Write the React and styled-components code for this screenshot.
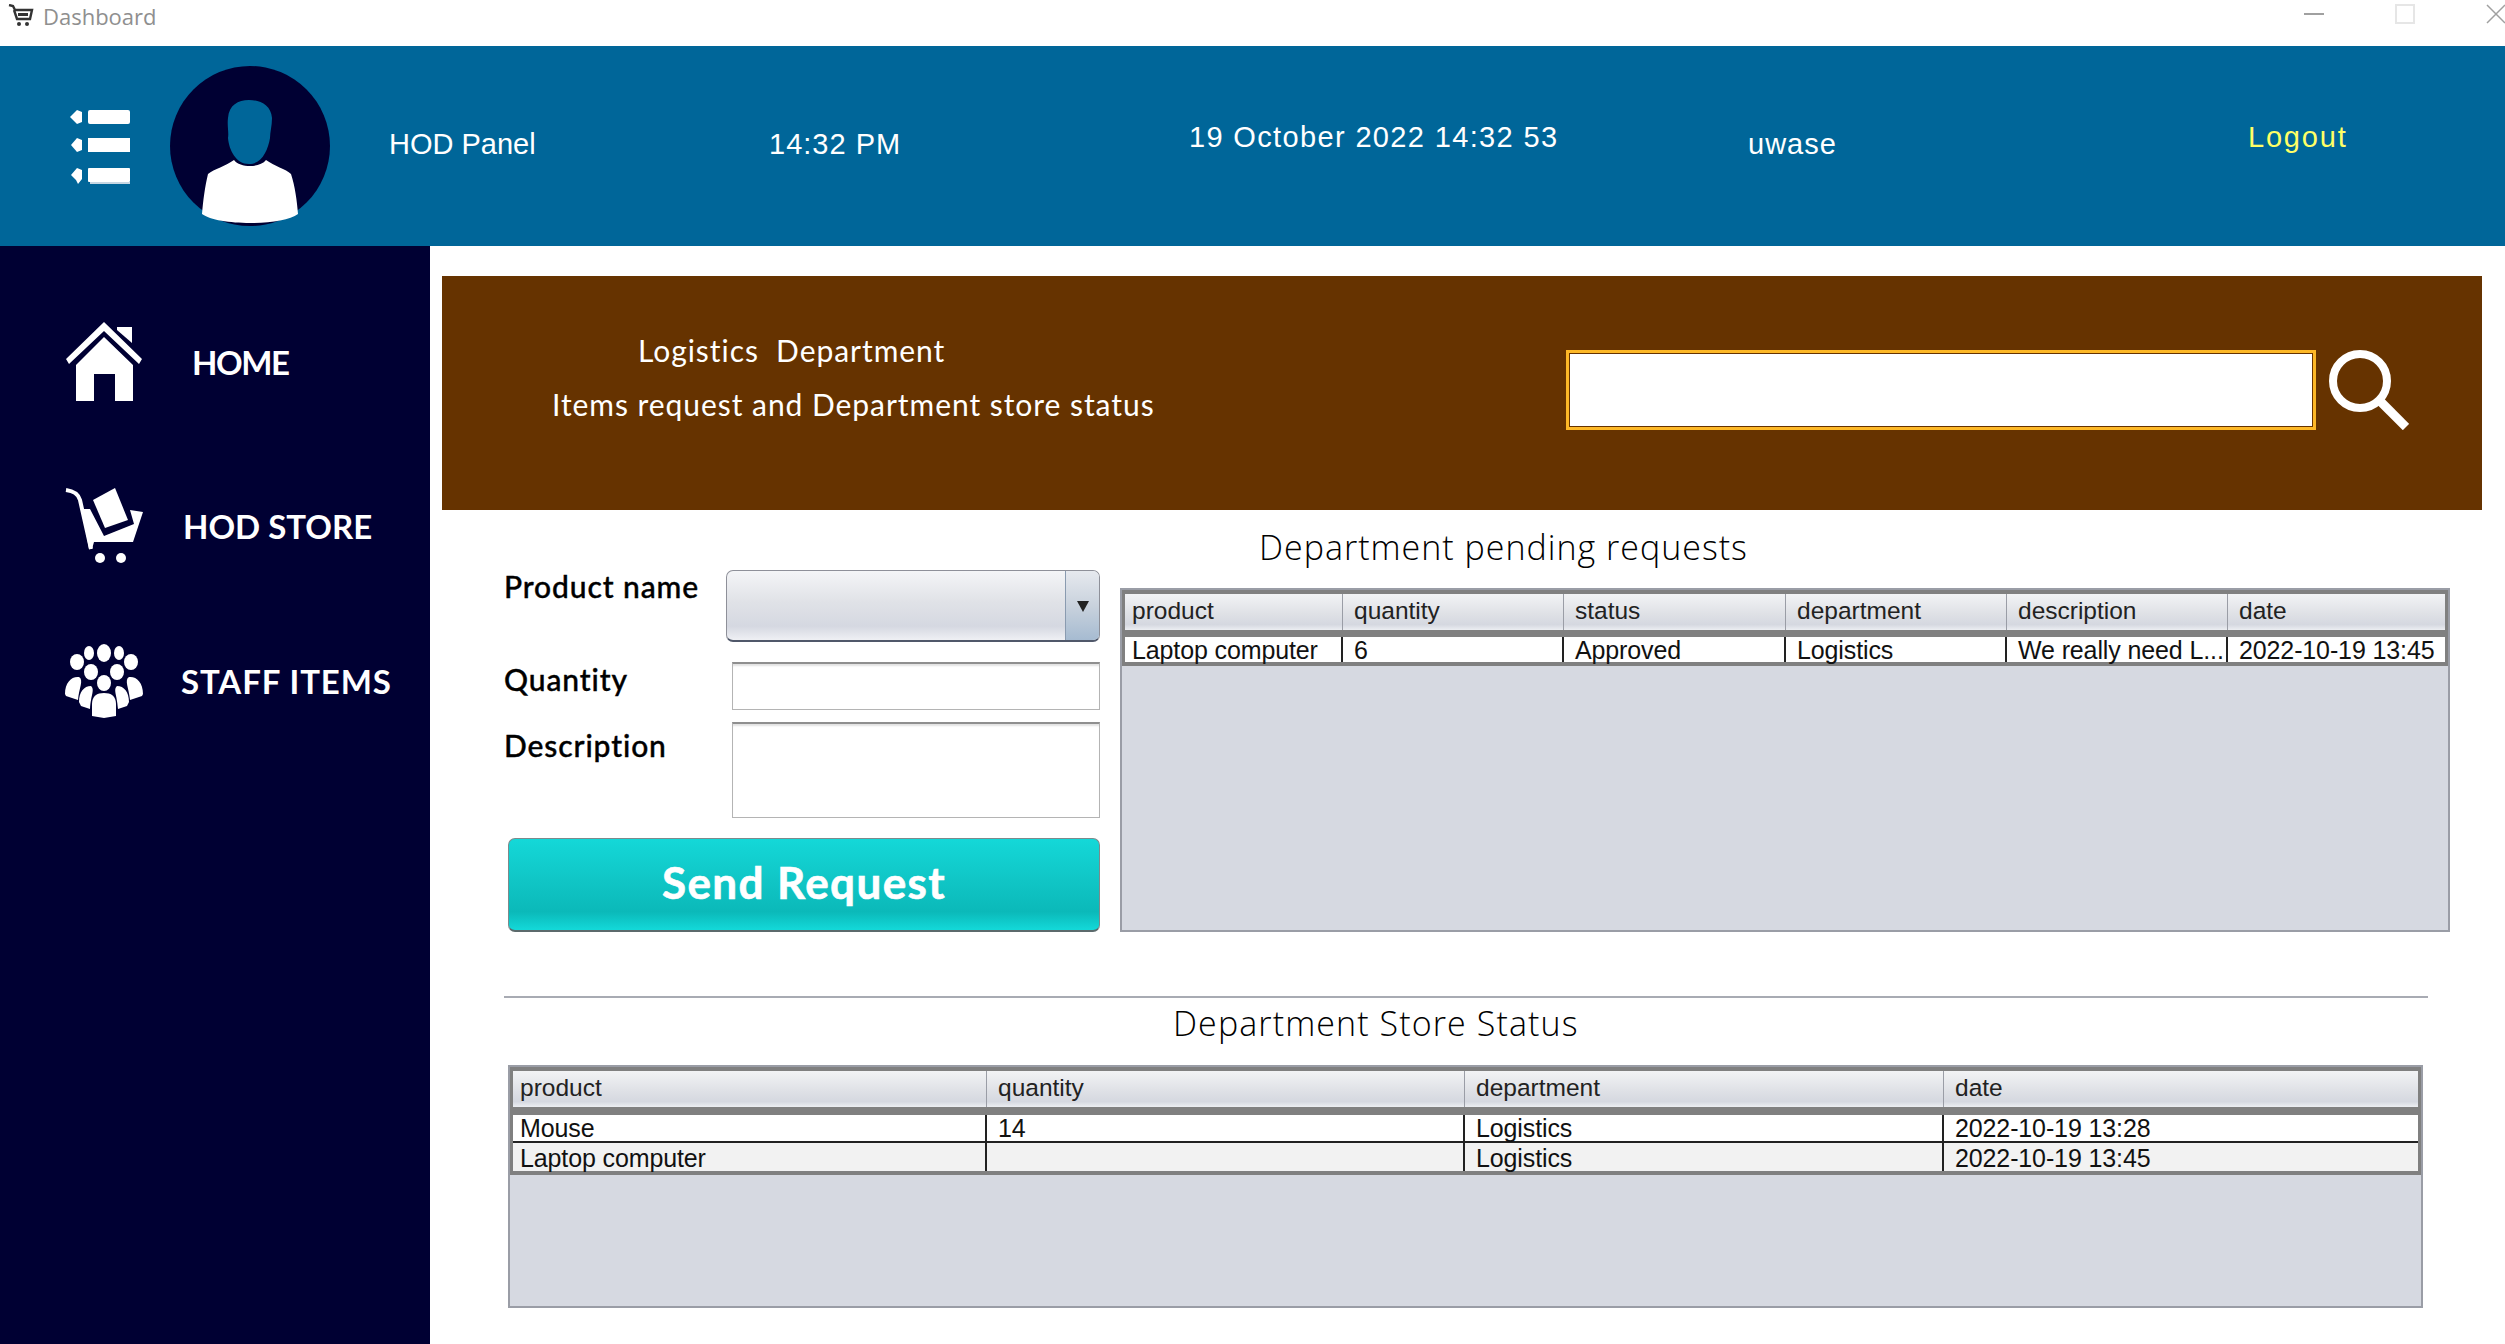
import React from "react";
import styled, { createGlobalStyle } from "styled-components";

const GlobalStyle = createGlobalStyle`
  html, body {
    margin: 0;
    padding: 0;
    background: #fff;
    overflow: hidden;
  }
`;

const Page = styled.div`
  width: 2505px;
  height: 1344px;
  overflow: hidden;
  display: flex;
  flex-direction: column;
  font-family: "Liberation Sans", Arial, sans-serif;
`;

const TitleBar = styled.div`
  height: 46px;
  flex: none;
  display: flex;
  align-items: flex-start;
  padding-left: 8px;
  color: #8f8f8f;
`;

const TitleText = styled.span`
  font-family: "Open Sans", sans-serif;
  font-size: 22px;
  line-height: 32px;
  margin-left: 9px;
`;

const WindowButtons = styled.div`
  margin-left: auto;
  display: flex;
  align-items: flex-start;
  padding-top: 4px;
  gap: 71px;
  margin-right: -1px;
`;

const Header = styled.header`
  height: 200px;
  flex: none;
  background: #006699;
  padding-left: 70px;
  display: grid;
  grid-template-columns: 100px 219px 380px 420px 559px 500px auto;
  align-items: center;
`;

const HeaderText = styled.div`
  color: ${(p) => (p.$yellow ? "#ffff66" : "#fff")};
  font-size: 29px;
  letter-spacing: ${(p) => p.$spacing || "0"};
  padding-bottom: ${(p) => (p.$raised ? "18px" : "4px")};
  white-space: nowrap;
`;

const MenuSvg = styled.svg`
  margin-top: 2px;
`;

const Body = styled.div`
  flex: 1;
  display: flex;
  min-height: 0;
`;

const Sidebar = styled.nav`
  width: 430px;
  flex: none;
  background: #000033;
  padding: 34px 0 0 64px;
  box-sizing: border-box;
`;

const NavItem = styled.div`
  display: flex;
  align-items: center;
  height: ${(p) => p.$height}px;
  gap: ${(p) => p.$gap}px;
`;

const NavLabel = styled.span`
  color: #fff;
  font-family: Lato, sans-serif;
  font-weight: 700;
  font-size: 33px;
  letter-spacing: ${(p) => p.$spacing || "0"};
  white-space: nowrap;
`;

const Content = styled.main`
  flex: 1;
  min-width: 0;
  padding: 30px 0 0 12px;
`;

const Banner = styled.section`
  width: 2040px;
  height: 234px;
  background: #663300;
  display: flex;
  align-items: center;
`;

const BannerText = styled.div`
  width: 1124px;
  flex: none;
  padding-bottom: 32px;
  color: #fff;
  font-family: Lato, sans-serif;
  font-size: 30px;
  letter-spacing: 0.95px;
`;

const BannerLine = styled.div`
  padding-left: ${(p) => p.$indent}px;
  height: 54px;
  line-height: 54px;
  white-space: pre;
`;

const SearchInput = styled.input`
  width: 750px;
  height: 80px;
  margin-bottom: 6px;
  box-sizing: border-box;
  background: #fff;
  border: 3px solid #fdb827;
  box-shadow: inset 0 0 0 1px #663300;
  outline: none;
`;

const SearchIcon = styled.svg`
  width: 80px;
  height: 80px;
  margin: 0 0 6px 13px;
  flex: none;
`;

const Columns = styled.div`
  display: flex;
  gap: 20px;
  padding-left: 62px;
`;

const Form = styled.form`
  width: 596px;
  flex: none;
  padding-top: 60px;
  margin: 0;
`;

const Field = styled.div`
  display: flex;
  justify-content: space-between;
  align-items: flex-start;
  margin-bottom: ${(p) => p.$after}px;
`;

const FieldLabel = styled.label`
  color: #000;
  font-family: Lato, sans-serif;
  font-weight: 500;
  font-size: 30px;
  letter-spacing: 0.9px;
  line-height: 36px;
  margin-top: ${(p) => p.$top}px;
  -webkit-text-stroke: 0.4px #000;
`;

const Combo = styled.div`
  width: 374px;
  height: 72px;
  box-sizing: border-box;
  display: flex;
  justify-content: flex-end;
  border: 1px solid #8e9099;
  border-bottom: 2px solid #50586a;
  border-radius: 7px;
  overflow: hidden;
  background: linear-gradient(#f4f5f7, #e0e2e7 45%, #d5d8e1 80%, #eff0f4);
`;

const ComboArrow = styled.div`
  width: 34px;
  border-left: 1px solid #8a9bb0;
  background: linear-gradient(#e6e9ee, #c9d2dd 50%, #a6bbd1);
  display: flex;
  justify-content: center;
  padding-top: 30px;
  box-sizing: border-box;

  &::after {
    content: "";
    width: 0;
    height: 0;
    border-left: 6px solid transparent;
    border-right: 6px solid transparent;
    border-top: 11px solid #222;
  }
`;

const TextInput = styled.input`
  width: 368px;
  height: 48px;
  box-sizing: border-box;
  border: 1px solid #b4b4b4;
  border-top: 2px solid #8f8f8f;
  box-shadow: inset 0 3px 2px -1px #e2e2e2;
  outline: none;
  display: block;
`;

const TextArea = styled.textarea`
  width: 368px;
  height: 96px;
  box-sizing: border-box;
  border: 1px solid #b4b4b4;
  border-top: 2px solid #8f8f8f;
  box-shadow: inset 0 3px 2px -1px #e2e2e2;
  outline: none;
  resize: none;
  display: block;
`;

const SendButton = styled.button`
  width: 592px;
  height: 94px;
  margin: 0 0 0 4px;
  padding: 0 0 6px;
  display: block;
  border: 1px solid #7d8a8c;
  border-bottom: 2px solid #5c6a6c;
  border-radius: 7px;
  background: linear-gradient(#14d8d8, #10c6c6 45%, #0bb9b9 80%, #13d9d9);
  color: #fff;
  font-family: Lato, sans-serif;
  font-weight: 700;
  font-size: 44px;
  letter-spacing: 1.4px;
  -webkit-text-stroke: 0.6px #fff;
`;

const TablePanel = styled.section`
  width: 1330px;
  flex: none;
`;

const Heading = styled.h2`
  margin: 0;
  height: ${(p) => p.$height}px;
  line-height: ${(p) => p.$line}px;
  padding-left: ${(p) => p.$indent}px;
  font-family: "Open Sans", sans-serif;
  font-weight: 300;
  font-size: 34px;
  letter-spacing: ${(p) => p.$spacing || "0"};
  color: #000;
  white-space: nowrap;
`;

const TableFrame = styled.div`
  height: ${(p) => p.$height}px;
  width: ${(p) => p.$width}px;
  box-sizing: border-box;
  border: 2px solid #9a9da6;
  background: #d6d9e1;
  overflow: hidden;
`;

const Grid = styled.div`
  background: #808080;
  padding: 4px 3px;
`;

const HeaderRow = styled.div`
  display: grid;
  grid-template-columns: ${(p) => p.$columns};
  height: 36px;
  margin-bottom: ${(p) => p.$gap}px;
  background: linear-gradient(#f2f3f5, #dfe1e6 55%, #d5d8e0 85%, #eceef2);
`;

const HeaderCell = styled.div`
  font-size: 24.5px;
  line-height: 34px;
  padding-left: 11px;
  color: #222;
  box-sizing: border-box;
  white-space: nowrap;
  &:first-child {
    padding-left: 7px;
  }
  &:not(:last-child) {
    border-right: 1px solid #9a9da6;
  }
`;

const DataRow = styled.div`
  display: grid;
  grid-template-columns: ${(p) => p.$columns};
  height: ${(p) => p.$height}px;
  box-sizing: content-box;
  background: ${(p) => (p.$odd ? "#f2f2f2" : "#fff")};
  border-top: ${(p) => (p.$first ? "0" : "2px solid #222")};
`;

const DataCell = styled.div`
  font-size: 25px;
  letter-spacing: -0.12px;
  line-height: ${(p) => p.$line}px;
  padding: ${(p) => p.$pad}px 0 0 11px;
  color: #111;
  box-sizing: border-box;
  white-space: nowrap;
  &:first-child {
    padding-left: 7px;
  }
  &:not(:last-child) {
    border-right: 2px solid #222;
  }
`;

const Divider = styled.hr`
  width: 1924px;
  height: 2px;
  margin: 64px 0 0 62px;
  border: 0;
  background: #a8abb3;
`;

const StoreSection = styled.section`
  padding-left: 66px;
`;

const DataTable = ({ columns, head, rows, height, width, gap, rowHeights, rowPads }) => (
  <TableFrame $height={height} $width={width}>
    <Grid>
      <HeaderRow $columns={columns} $gap={gap}>
        {head.map((h) => (
          <HeaderCell key={h}>{h}</HeaderCell>
        ))}
      </HeaderRow>
      {rows.map((row, i) => (
        <DataRow
          key={i}
          $columns={columns}
          $height={rowHeights[i]}
          $odd={i % 2 === 1}
          $first={i === 0}
        >
          {row.map((cell, j) => (
            <DataCell key={j} $line={rowHeights[i] - rowPads[i]} $pad={rowPads[i]}>
              {cell}
            </DataCell>
          ))}
        </DataRow>
      ))}
    </Grid>
  </TableFrame>
);

const CartSmall = () => (
  <svg width="26" height="24" viewBox="0 0 26 24" style={{ marginTop: 4 }}>
    <path d="M1 1 L5 2 L7 6 H24 L22 15 H9 L6 6" fill="none" stroke="#333" strokeWidth="2.4" />
    <rect x="10" y="9" width="10" height="3" fill="#333" />
    <circle cx="11" cy="20" r="2" fill="#333" />
    <circle cx="19" cy="20" r="2" fill="#333" />
  </svg>
);

const MenuIcon = () => (
  <MenuSvg width="60" height="74" viewBox="0 0 60 74">
    <path d="M7 0 L12 2 V12 L7 14 L0 7 Z" fill="#fff" />
    <rect x="18" y="0" width="42" height="14" rx="2" fill="#fff" />
    <path d="M7 28 L12 30 V40 L7 42 L1 35 Z" fill="#fff" />
    <rect x="18" y="28" width="42" height="14" fill="#fff" />
    <path d="M7 58 L12 60 V69 L8 74 L6 70 L1 65 Z" fill="#fff" />
    <rect x="18" y="58" width="42" height="14" rx="1" fill="#fff" />
    <rect x="20" y="72" width="40" height="2" fill="#c6d6e2" />
  </MenuSvg>
);

const Avatar = () => (
  <svg width="160" height="160" viewBox="0 0 160 160">
    <circle cx="80" cy="80" r="80" fill="#000033" />
    <path
      d="M79 34 C68 34 59 39 58 52 C57 60 59 66 58 72 C59 84 66 98 79 98 C92 98 98 84 100 72 C100 66 102 60 102 52 C101 39 90 34 79 34 Z"
      fill="#006699"
    />
    <path
      d="M64 94 C70 102 90 102 96 94 C104 100 116 103 121 108 C125 120 127 135 128 148 C112 160 48 160 32 148 C33 135 35 120 38 108 C44 103 56 100 64 94 Z"
      fill="#fff"
    />
  </svg>
);

const HomeIcon = () => (
  <svg width="80" height="80" viewBox="0 0 80 80" fill="#fff">
    <path d="M2 37 L40 0 L78 37 L75 42 L40 9 L5 42 Z" />
    <path d="M53 5 H68 V21 L53 8 Z" />
    <path d="M40 15 L69 43 V79 H51 V52 H30 V79 H12 V43 Z" />
  </svg>
);

const CartIcon = () => (
  <svg width="80" height="78" viewBox="0 0 80 78" fill="#fff">
    <path d="M2 3 C9 4 14 6 16 13 L27 62" fill="none" stroke="#fff" strokeWidth="4" />
    <path d="M29 13 L51 1 L64 33 L41 41 Z" />
    <path d="M18 22 L26 22 L40 49 L70 37 L66 23 L79 25 L69 55 L30 55 L28 62 L25 62 Z" />
    <circle cx="36" cy="71" r="5" />
    <circle cx="57" cy="71" r="5" />
  </svg>
);

const PeopleIcon = () => (
  <svg width="80" height="74" viewBox="0 0 80 74" fill="#fff">
    <ellipse cx="40" cy="9" rx="7" ry="9" />
    <ellipse cx="25" cy="9" rx="5" ry="7" />
    <ellipse cx="55" cy="9" rx="5" ry="7" />
    <ellipse cx="13" cy="18" rx="7" ry="8" />
    <ellipse cx="67" cy="18" rx="7" ry="8" />
    <ellipse cx="27" cy="28" rx="7" ry="8" />
    <ellipse cx="53" cy="28" rx="7" ry="8" />
    <ellipse cx="40" cy="39" rx="7" ry="8" />
    <path d="M1 50 C1 38 8 32 15 33 C20 36 15 44 14 56 L2 52 Z" />
    <path d="M79 50 C79 38 72 32 65 33 C60 36 65 44 66 56 L78 52 Z" />
    <path d="M15 58 C15 48 20 42 27 42 C31 46 27 50 26 65 L17 62 Z" />
    <path d="M65 58 C65 48 60 42 53 42 C49 46 53 50 54 65 L63 62 Z" />
    <path d="M28 72 V60 C28 52 33 49 40 49 C47 49 52 52 52 60 V72 L40 74 Z" />
  </svg>
);

const App = () => {
  const pendingCols = "218px 221px 222px 221px 221px 218px";
  const storeCols = "474px 478px 479px 473px";

  return (
    <Page>
      <GlobalStyle />
      <TitleBar>
        <CartSmall />
        <TitleText>Dashboard</TitleText>
        <WindowButtons>
          <svg width="20" height="20" viewBox="0 0 20 20">
            <rect x="0" y="9" width="20" height="2" fill="#a0a0a0" />
          </svg>
          <svg width="20" height="20" viewBox="0 0 20 20">
            <rect x="1" y="1" width="18" height="18" fill="none" stroke="#e6e6e6" strokeWidth="2" />
          </svg>
          <svg width="20" height="20" viewBox="0 0 20 20">
            <path d="M1 1 L19 19 M19 1 L1 19" stroke="#a0a0a0" strokeWidth="1.5" />
          </svg>
        </WindowButtons>
      </TitleBar>

      <Header>
        <MenuIcon />
        <Avatar />
        <HeaderText>HOD Panel</HeaderText>
        <HeaderText $spacing="1px">14:32 PM</HeaderText>
        <HeaderText $raised $spacing="1.35px">19 October 2022 14:32 53</HeaderText>
        <HeaderText $spacing="1px">uwase</HeaderText>
        <HeaderText $raised $yellow $spacing="1.8px">Logout</HeaderText>
      </Header>

      <Body>
        <Sidebar>
          <NavItem $height={164} $gap={48}>
            <HomeIcon />
            <NavLabel $spacing="-1.4px">HOME</NavLabel>
          </NavItem>
          <NavItem $height={164} $gap={39}>
            <CartIcon />
            <NavLabel>HOD STORE</NavLabel>
          </NavItem>
          <NavItem $height={146} $gap={37}>
            <PeopleIcon />
            <NavLabel $spacing="0.9px">STAFF ITEMS</NavLabel>
          </NavItem>
        </Sidebar>

        <Content>
          <Banner>
            <BannerText>
              <BannerLine $indent={196}>{"Logistics  Department"}</BannerLine>
              <BannerLine $indent={110}>Items request and Department store status</BannerLine>
            </BannerText>
            <SearchInput />
            <SearchIcon viewBox="0 0 80 80">
              <circle cx="31" cy="31" r="27" fill="none" stroke="#fff" strokeWidth="8" />
              <path d="M50 50 L77 77" stroke="#fff" strokeWidth="9" />
            </SearchIcon>
          </Banner>

          <Columns>
            <Form>
              <Field $after={20}>
                <FieldLabel $top={-2}>Product name</FieldLabel>
                <Combo>
                  <ComboArrow />
                </Combo>
              </Field>
              <Field $after={12}>
                <FieldLabel $top={-1}>Quantity</FieldLabel>
                <TextInput />
              </Field>
              <Field $after={20}>
                <FieldLabel $top={5}>Description</FieldLabel>
                <TextArea />
              </Field>
              <SendButton type="button">Send Request</SendButton>
            </Form>

            <TablePanel>
              <Heading $height={78} $line={74} $indent={139} $spacing="1px">
                Department pending requests
              </Heading>
              <DataTable
                columns={pendingCols}
                head={["product", "quantity", "status", "department", "description", "date"]}
                rows={[
                  ["Laptop computer", "6", "Approved", "Logistics", "We really need L...", "2022-10-19 13:45"],
                ]}
                rowHeights={[25]}
                rowPads={[2]}
                height={344}
                width={1330}
                gap={7}
              />
            </TablePanel>
          </Columns>

          <Divider />

          <StoreSection>
            <Heading $height={67} $line={50} $indent={665} $spacing="1.1px">
              Department Store Status
            </Heading>
            <DataTable
              columns={storeCols}
              head={["product", "quantity", "department", "date"]}
              rows={[
                ["Mouse", "14", "Logistics", "2022-10-19 13:28"],
                ["Laptop computer", "", "Logistics", "2022-10-19 13:45"],
              ]}
              rowHeights={[26, 28]}
              rowPads={[0, 2]}
              height={243}
              width={1915}
              gap={8}
            />
          </StoreSection>
        </Content>
      </Body>
    </Page>
  );
};

export default App;
